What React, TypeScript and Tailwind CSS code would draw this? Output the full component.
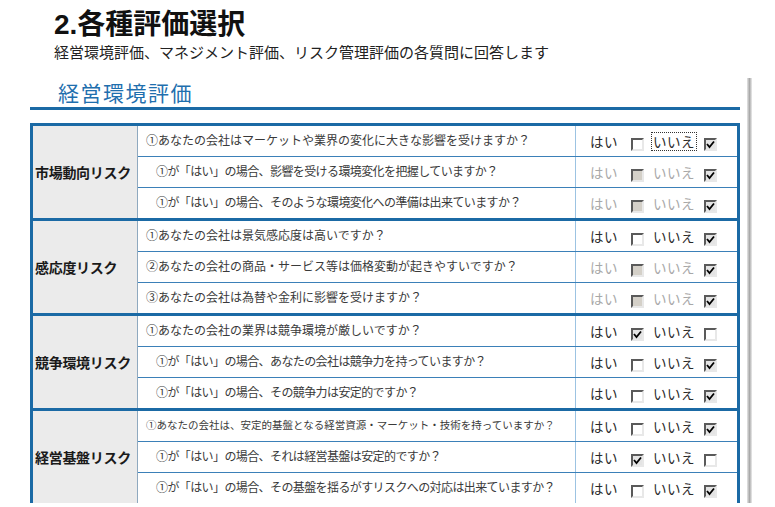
type Row = {
  q: string;
  indent?: boolean;
  small?: boolean;
  yes: boolean;
  disabled?: boolean;
  focus?: boolean;
};

type Group = {
  label: string;
  rows: Row[];
};

const groups: Group[] = [
  {
    label: "市場動向リスク",
    rows: [
      { q: "①あなたの会社はマーケットや業界の変化に大きな影響を受けますか？", yes: false, focus: true },
      { q: "①が「はい」の場合、影響を受ける環境変化を把握していますか？", indent: true, yes: false, disabled: true },
      { q: "①が「はい」の場合、そのような環境変化への準備は出来ていますか？", indent: true, yes: false, disabled: true },
    ],
  },
  {
    label: "感応度リスク",
    rows: [
      { q: "①あなたの会社は景気感応度は高いですか？", yes: false },
      { q: "②あなたの会社の商品・サービス等は価格変動が起きやすいですか？", yes: false, disabled: true },
      { q: "③あなたの会社は為替や金利に影響を受けますか？", yes: false, disabled: true },
    ],
  },
  {
    label: "競争環境リスク",
    rows: [
      { q: "①あなたの会社の業界は競争環境が厳しいですか？", yes: true },
      { q: "①が「はい」の場合、あなたの会社は競争力を持っていますか？", indent: true, yes: false },
      { q: "①が「はい」の場合、その競争力は安定的ですか？", indent: true, yes: false },
    ],
  },
  {
    label: "経営基盤リスク",
    rows: [
      { q: "①あなたの会社は、安定的基盤となる経営資源・マーケット・技術を持っていますか？", small: true, yes: false },
      { q: "①が「はい」の場合、それは経営基盤は安定的ですか？", indent: true, yes: true },
      { q: "①が「はい」の場合、その基盤を揺るがすリスクへの対応は出来ていますか？", indent: true, yes: false },
    ],
  },
];

function Box({ checked, disabled }: { checked: boolean; disabled?: boolean }) {
  const fill = disabled ? "bg-[#d4d0c8]" : checked ? "bg-[#e4e4e4]" : "bg-white";
  return (
    <span
      className={`mt-[7px] flex h-[13px] w-[13px] items-center justify-center border-2 border-t-[#5a5a5a] border-l-[#5a5a5a] border-r-[#e8e8e8] border-b-[#e8e8e8] ${fill}`}
    >
      {checked && (
        <svg width="9" height="9" viewBox="0 0 9 9">
          <polyline points="1,4 3.5,7 8,1.5" fill="none" stroke="#000" strokeWidth="1.8" />
        </svg>
      )}
    </span>
  );
}

function Answer({ row }: { row: Row }) {
  const txt = row.disabled ? "text-[#a8a8a8]" : "text-[#2a2a2a]";
  return (
    <div className="flex h-full items-center pl-[14px]">
      <span className={`w-[28px] whitespace-nowrap text-[13.5px] leading-[14px] tracking-[0.5px] ${txt}`}>はい</span>
      <span className="ml-[13px]">
        <Box checked={row.yes} disabled={row.disabled} />
      </span>
      <span
        className={`ml-[7px] whitespace-nowrap px-[1px] text-[13.5px] leading-[17px] tracking-[0.5px] ${txt} ${
          row.focus ? "border border-dotted border-[#333]" : "border border-transparent"
        }`}
      >
        いいえ
      </span>
      <span className="ml-[7px]">
        <Box checked={!row.yes} />
      </span>
    </div>
  );
}

export default function App() {
  return (
    <div className="relative h-[507px] w-[775px] overflow-hidden bg-white font-['Noto_Sans_CJK_JP',sans-serif] text-[#222]">
      <div className="pl-[54px] pt-[10px]">
        <h1 className="font-['Liberation_Sans','Noto_Sans_CJK_JP',sans-serif] text-[28px] font-bold leading-[29px] text-[#111]">
          2.各種評価選択
        </h1>
        <p className="mt-[5px] text-[15px] leading-[15px] text-[#222]">
          経営環境評価、マネジメント評価、リスク管理評価の各質問に回答します
        </p>
      </div>

      <div className="mt-[19px] flex">
        <div className="ml-[30px] w-[710px]">
          <h2 className="pl-[28px] pt-[4px] text-[21px] leading-[21px] tracking-[1.5px] text-[#1f6fae]">
            経営環境評価
          </h2>
          <div className="mt-[4px] h-[3px] bg-[#1b6aa5]" />

          <div className="mt-[13px] border-x-[3px] border-[#1b6aa5]">
            {groups.map((g) => (
              <div key={g.label} className="flex border-t-[3px] border-[#1b6aa5]">
                <div className="flex w-[105px] items-center border-r border-[#8fa9bf] bg-[#ebebeb] pl-[2px] text-[14px] font-bold tracking-[-0.3px] text-[#1a1a1a]">
                  {g.label}
                </div>
                <div className="flex-1">
                  {g.rows.map((r, i) => (
                    <div
                      key={i}
                      className={`flex h-[30px] ${i < 2 ? "box-content border-b border-[#3b80b8]" : ""}`}
                    >
                      <div
                        className={`flex w-[438px] items-center overflow-hidden whitespace-nowrap border-r border-[#9cc3e2] pb-[3px] text-[#3a3a3a] ${
                          r.indent ? "pl-[18px] tracking-[-0.6px]" : "pl-[8px]"
                        } ${r.small ? "text-[10.5px]" : "text-[12px]"}`}
                      >
                        {r.q}
                      </div>
                      <div className="flex-1">
                        <Answer row={r} />
                      </div>
                    </div>
                  ))}
                </div>
              </div>
            ))}
          </div>
        </div>
        <div className="ml-[7px] w-[5px] bg-linear-to-r from-[#e6e6e6] via-[#a9a9a9] to-[#ececec]" />
      </div>
    </div>
  );
}
